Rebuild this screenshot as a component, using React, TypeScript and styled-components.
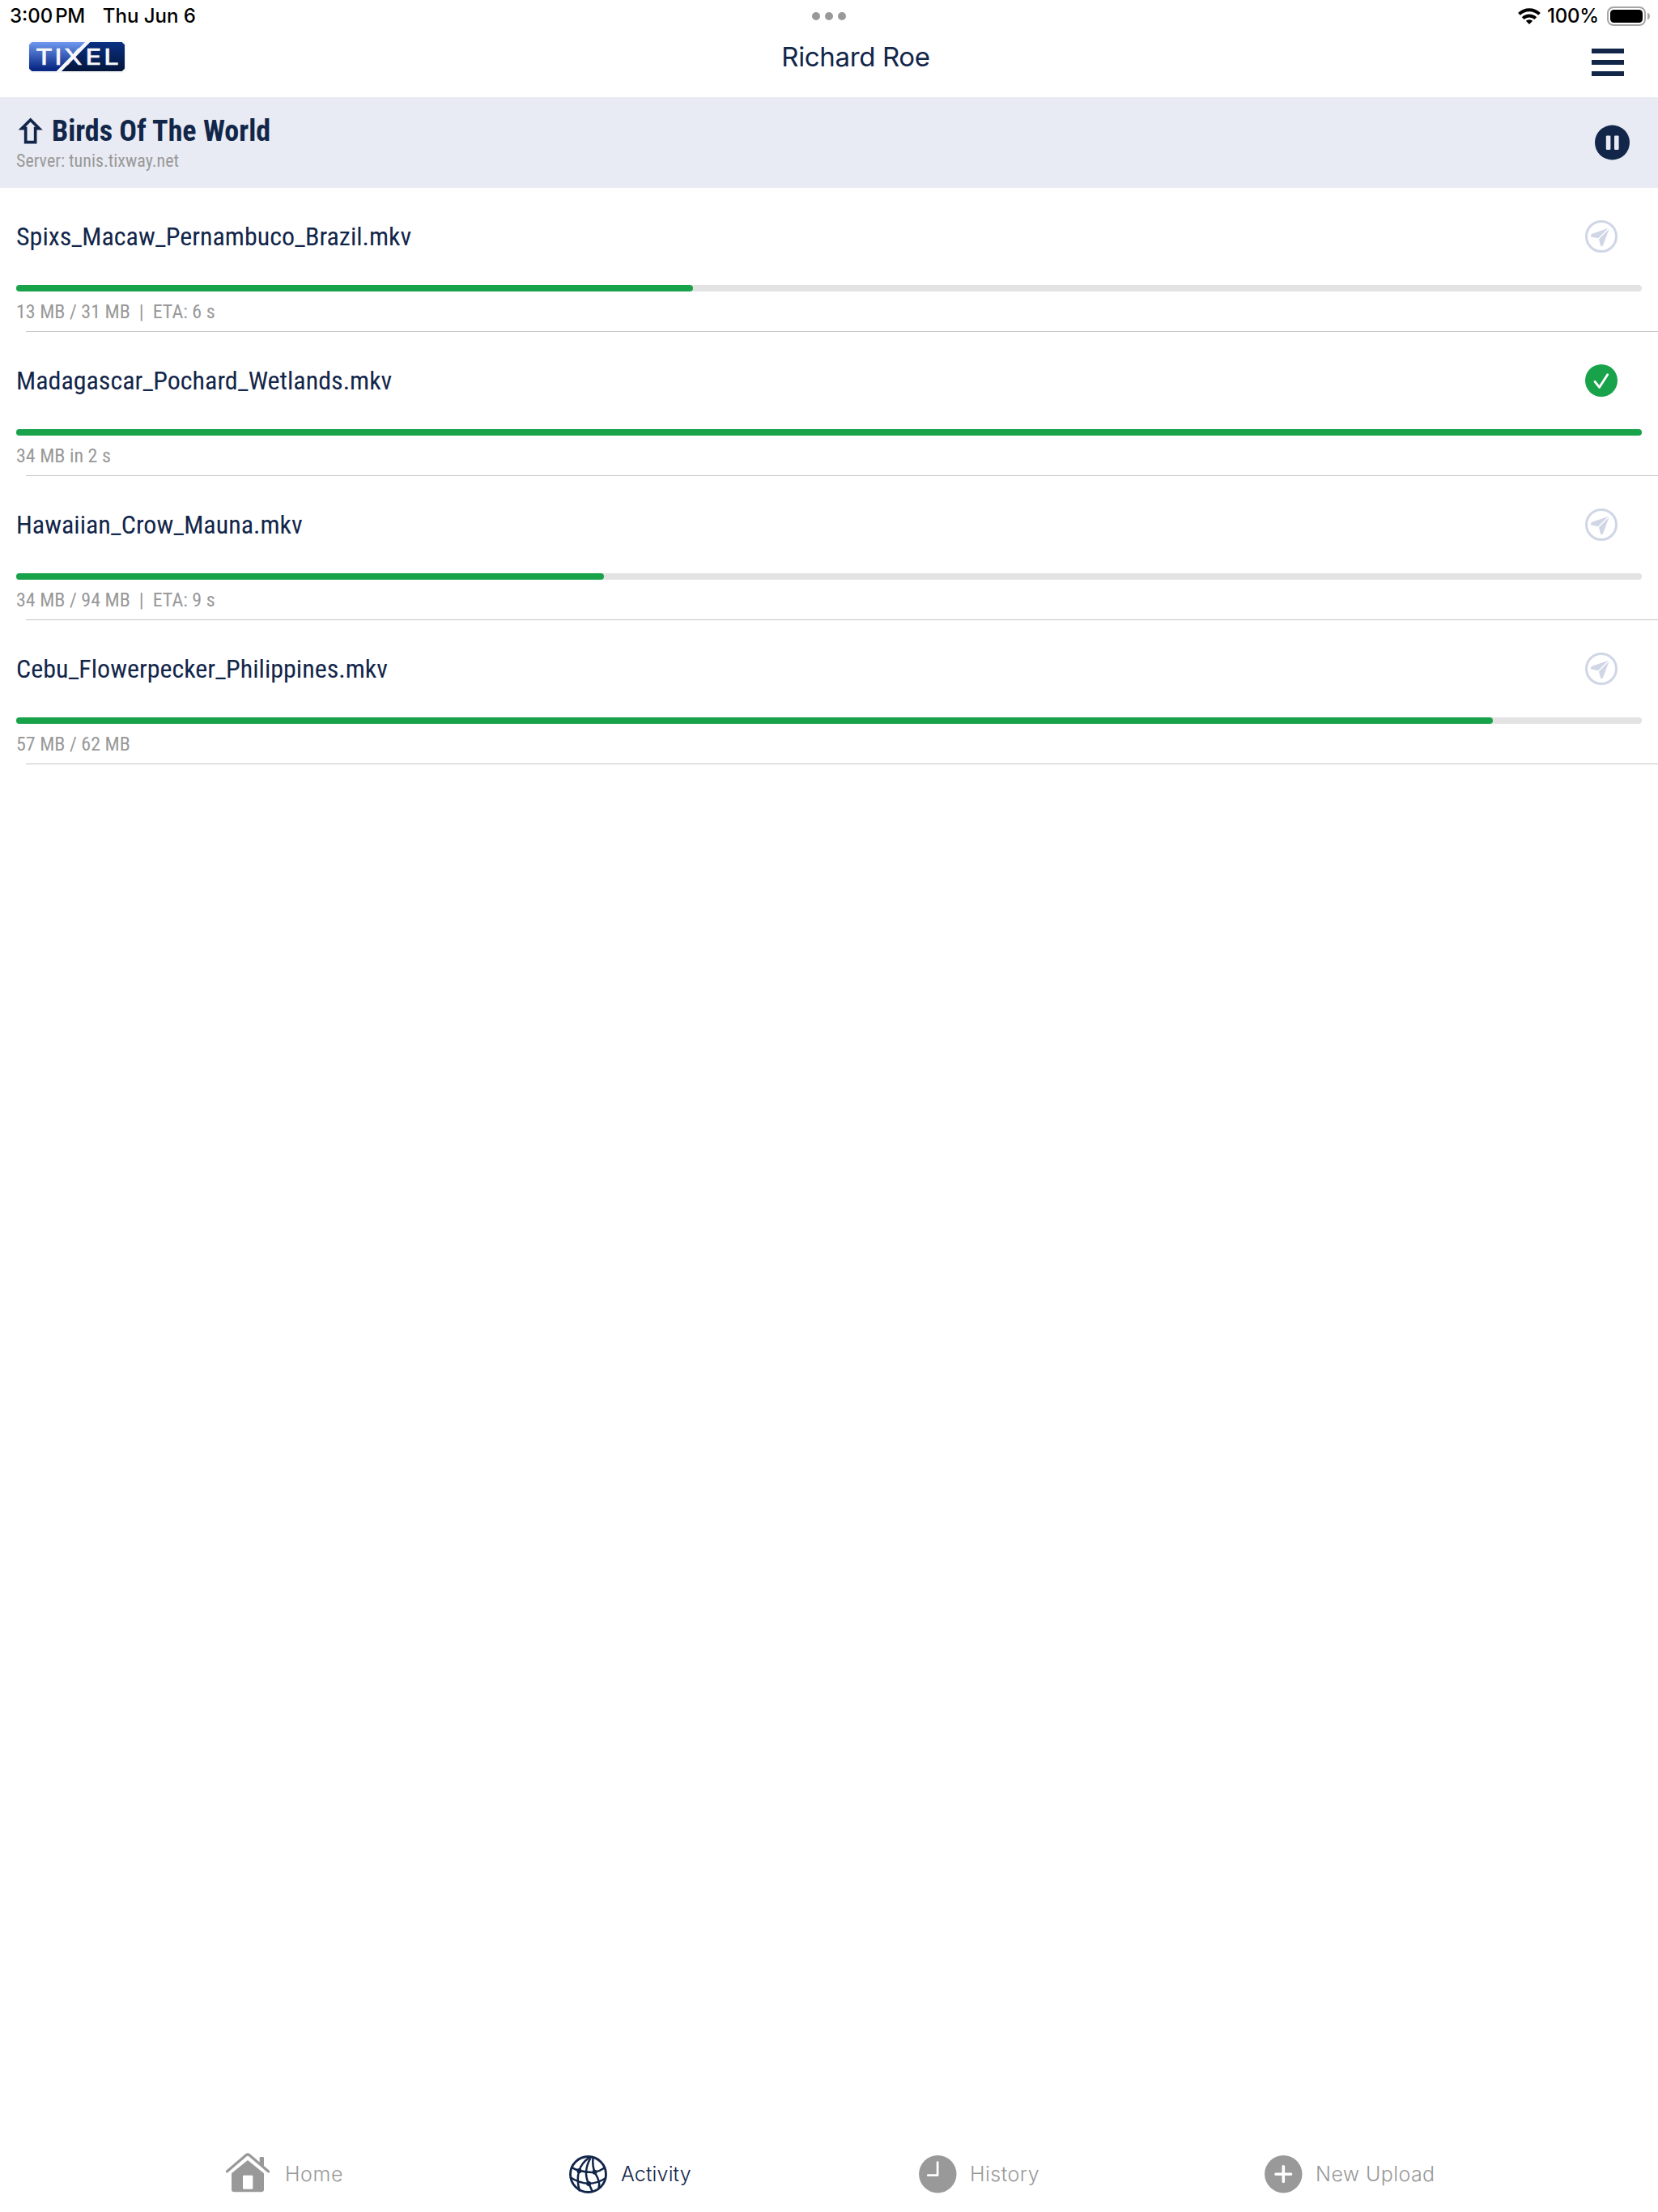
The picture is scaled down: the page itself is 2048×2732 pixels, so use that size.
import * as React from 'react';
import styled, { createGlobalStyle } from 'styled-components';

const navy = '#12264a';
const grey = '#999999';
const green = '#18a34a';

const GlobalStyle = createGlobalStyle`
    body{
        margin: 0;
        background: white;
        font-family: Inter, "Liberation Sans", sans-serif;
    }
    svg{
        display: block;
        flex: none;
    }
`;

const Screen = styled.div`
    display: flex;
    flex-direction: column;
    width: 2048px;
    height: 2732px;
    background: white;
    color: ${navy};
`;

const StatusBar = styled.div`
    display: grid;
    grid-template-columns: 1fr auto 1fr;
    height: 40px;
    padding: 0 10px 0 12px;
    box-sizing: border-box;
    color: black;
    font-size: 24px;
    font-weight: 500;
    line-height: 39px;
    .time{
        margin-right: 22px;
    }
    .period{
        margin-left: 3px;
        letter-spacing: -0.4px;
    }
`;

const Dots = styled.div`
    display: flex;
    align-items: center;
    gap: 6px;
    margin-right: 2px;
    i{
        width: 10px;
        height: 10px;
        border-radius: 50%;
        background: ${grey};
    }
`;

const StatusRight = styled.div`
    display: flex;
    justify-content: flex-end;
    .percent{
        margin: 0 10px 0 8px;
        letter-spacing: -0.2px;
    }
`;

const Header = styled.header`
    display: flex;
    align-items: flex-start;
    height: 80px;
    padding: 10px 42px 0 35px;
    box-sizing: border-box;
`;

const Title = styled.h1`
    flex: 1;
    margin: 0;
    padding-right: 8px;
    text-align: center;
    font-size: 33px;
    font-weight: 390;
    line-height: 40px;
    letter-spacing: -0.35px;
`;

const Burger = styled.div`
    display: flex;
    flex-direction: column;
    gap: 8px;
    width: 40px;
    margin-top: 10px;
    i{
        height: 6px;
        background: ${navy};
    }
`;

const Project = styled.section`
    display: flex;
    align-items: center;
    justify-content: space-between;
    height: 112px;
    padding: 0 35px 0 20px;
    box-sizing: border-box;
    background: #e8ebf3;
    font-family: "Roboto Condensed", Roboto, sans-serif;
    font-stretch: 75%;
`;

const ProjectInfo = styled.div`
    height: 70px;
    h2{
        display: flex;
        gap: 11px;
        margin: 0 0 3px;
        padding-left: 3px;
        font-size: 36px;
        font-weight: 700;
        line-height: 42px;
    }
    h2 svg{
        margin-top: 4px;
    }
    p{
        margin: 0;
        color: ${grey};
        font-size: 22px;
        font-weight: 380;
        line-height: 25px;
    }
`;

const List = styled.main`
    flex: 1;
    font-family: "Roboto Condensed", Roboto, sans-serif;
    font-stretch: 75%;
    font-weight: 375;
`;

const Row = styled.div`
    height: 178px;
    padding: 40px 20px 0;
    box-sizing: border-box;
    background: linear-gradient(#c6c6c8, #c6c6c8) 32px 100% / 100% 1px no-repeat;
    .top{
        display: flex;
        align-items: center;
        justify-content: space-between;
        height: 40px;
        padding-right: 30px;
        font-size: 32px;
        line-height: 38px;
    }
    .meta{
        color: ${grey};
        font-size: 24px;
        line-height: 28px;
        white-space: pre;
    }
`;

const Track = styled.div`
    height: 8px;
    margin: 40px 0 11px;
    border-radius: 4px;
    background: #e3e3e3;
    div{
        height: 8px;
        border-radius: 4px;
        background: ${green};
    }
`;

const TabBar = styled.nav`
    display: grid;
    grid-template-columns: 424px 432px 427px auto;
    height: 94px;
    padding-left: 279px;
`;

const Tab = styled.div<{ $active?: boolean; $gap: number; $spacing: number }>`
    display: flex;
    align-items: center;
    gap: ${p => p.$gap}px;
    color: ${p => (p.$active ? navy : grey)};
    font-size: 25px;
    font-weight: 365;
    line-height: 30px;
    letter-spacing: ${p => p.$spacing}px;
`;

const Logo = () => (
    <svg width="121" height="40" viewBox="0 0 363 120">
        <defs>
            <linearGradient id="logoLeft" x1="0" y1="0" x2="0" y2="1">
                <stop offset="0" stopColor="#6f97f0" />
                <stop offset="0.9" stopColor="#0a2a86" />
            </linearGradient>
            <linearGradient id="logoRight" x1="0" y1="0" x2="0" y2="1">
                <stop offset="0" stopColor="#0a3084" />
                <stop offset="1" stopColor="#03153a" />
            </linearGradient>
        </defs>
        <rect width="363" height="120" rx="14" fill="#f8f8fa" />
        <path d="M3 16 13 6H210L104 114H13L3 104Z" fill="url(#logoLeft)" />
        <path d="M229 6H347L357 16V104L347 114H123Z" fill="url(#logoRight)" />
        <text
            transform="scale(1.2 1)"
            x="48.7 92.5 138.3 201 256.5"
            y="90"
            textAnchor="middle"
            fontSize="82"
            fontWeight="500"
            fill="#f8f8fa"
            stroke="#f8f8fa"
            strokeWidth="1"
            strokeLinejoin="round"
        >
            TIXEL
        </text>
    </svg>
);

const Wifi = () => (
    <svg width="28" height="39" viewBox="0 0 28 39" fill="none" stroke="black" strokeWidth="4">
        <path d="M1.5 17.4a17.8 17.8 0 0 1 25 0" />
        <path d="M6.2 22.6a11.2 11.2 0 0 1 15.6 0" />
        <path d="M14 30l-4.2-4.2a6.2 6.2 0 0 1 8.4 0Z" fill="black" stroke="none" />
    </svg>
);

const Battery = () => (
    <svg width="53" height="40" viewBox="0 0 53 40">
        <rect x="1" y="9" width="46" height="22" rx="7" fill="none" stroke="#a6a6a6" strokeWidth="2" />
        <rect x="4" y="12" width="40" height="16" rx="4.5" />
        <path d="M50 15.5c4 1.6 4 7.4 0 9Z" fill="#a6a6a6" />
    </svg>
);

const UploadArrow = () => (
    <svg width="30" height="34" viewBox="0 0 90 102" fill="none" stroke={navy} strokeWidth="11">
        <path d="M44 9 76 41H62V92H26V41H12Z" />
    </svg>
);

const Pause = () => (
    <svg width="43" height="44" viewBox="0 0 43 44">
        <circle cx="21.5" cy="22" r="21.5" fill={navy} />
        <rect x="13.8" y="13.5" width="5.6" height="17.5" rx="1.2" fill="#e8ebf3" />
        <rect x="24" y="13.5" width="5.6" height="17.5" rx="1.2" fill="#e8ebf3" />
    </svg>
);

const Sending = () => (
    <svg width="40" height="40" viewBox="0 0 120 120" fill="#d0d6e6">
        <circle cx="60" cy="60" r="55.5" fill="none" stroke="#d0d6e6" strokeWidth="9" />
        <path d="M86 29 26 50Q20 53 20 58 20 62 25 62L48 67Z" />
        <path d="M89 32 67 91Q65 97 61 97 57 97 56 91L51 70Z" />
    </svg>
);

const Done = () => (
    <svg width="40" height="40" viewBox="0 0 120 120">
        <circle cx="60" cy="60" r="60" fill={green} />
        <path d="M36 64 53 85 83 38" fill="none" stroke="white" strokeWidth="8.5" strokeLinecap="round" strokeLinejoin="round" />
    </svg>
);

const Home = () => (
    <svg width="54" height="52" viewBox="0 0 162 156" fill={grey}>
        <path d="M4 69 74 9q7-6 14 0l70 60" fill="none" stroke={grey} strokeWidth="9.5" strokeLinecap="round" />
        <path d="M125 44V19q0-4 4-4h8q4 0 4 4v38Z" />
        <path fillRule="evenodd" d="M81 27 141 76V135q0 10-10 10H31q-10 0-10-10V76ZM66 83q-3 0-3 3v45q0 3 3 3h31q3 0 3-3V86q0-3-3-3Z" />
    </svg>
);

const Globe = () => (
    <svg width="47" height="47" viewBox="0 0 140 140" fill="none" stroke={navy} strokeWidth="7.5">
        <circle cx="70" cy="70" r="65.5" strokeWidth="8.5" />
        <path d="M73 9Q46 28 37 56 26 90 39 132" />
        <path d="M79 9Q50 60 72 104 80 120 86 134" />
        <path d="M88 9Q85 38 94 62 106 82 110 98 112 108 109 120" />
        <path d="M10 45Q24 53 37 56 66 64 94 62 113 58 130 46" />
        <path d="M5 81Q34 101 72 104 104 103 134 84" />
        <g fill={navy} stroke="none">
            <circle cx="37" cy="57" r="9" />
            <circle cx="94" cy="62" r="9" />
            <circle cx="72" cy="104" r="9" />
        </g>
    </svg>
);

const Clock = () => (
    <svg width="47" height="47" viewBox="0 0 47 47">
        <circle cx="23.3" cy="23.2" r="23.2" fill={grey} />
        <path d="M23.1 8.7V24.7H11.3" fill="none" stroke="white" strokeWidth="2.8" strokeLinecap="round" strokeLinejoin="round" />
    </svg>
);

const Plus = () => (
    <svg width="47" height="47" viewBox="0 0 47 47">
        <circle cx="23.3" cy="23.2" r="23.2" fill={grey} />
        <path d="M23.3 13.9V32.5M14 23.2H32.6" stroke="white" strokeWidth="3.6" strokeLinecap="round" />
    </svg>
);

const files = [
    { name: 'Spixs_Macaw_Pernambuco_Brazil.mkv', percent: 41.63, meta: '13 MB / 31 MB  |  ETA: 6 s' },
    { name: 'Madagascar_Pochard_Wetlands.mkv', percent: 100, meta: '34 MB in 2 s' },
    { name: 'Hawaiian_Crow_Mauna.mkv', percent: 36.16, meta: '34 MB / 94 MB  |  ETA: 9 s' },
    { name: 'Cebu_Flowerpecker_Philippines.mkv', percent: 90.84, meta: '57 MB / 62 MB' },
];

const FileRow: React.FunctionComponent<{
    name: string;
    percent: number;
    meta: string;
}> = ({ name, percent, meta }) => (
    <Row>
        <div className="top">
            <span>{name}</span>
            {percent === 100 ? <Done /> : <Sending />}
        </div>
        <Track>
            <div style={{ width: percent + '%' }} />
        </Track>
        <div className="meta">{meta}</div>
    </Row>
);

const App = () => (
    <Screen>
        <GlobalStyle />
        <StatusBar>
            <div>
                <span className="time">3:00<span className="period">PM</span></span>
                <span>Thu Jun 6</span>
            </div>
            <Dots><i /><i /><i /></Dots>
            <StatusRight>
                <Wifi />
                <span className="percent">100%</span>
                <Battery />
            </StatusRight>
        </StatusBar>
        <Header>
            <Logo />
            <Title>Richard Roe</Title>
            <Burger><i /><i /><i /></Burger>
        </Header>
        <Project>
            <ProjectInfo>
                <h2><UploadArrow />Birds Of The World</h2>
                <p>Server: tunis.tixway.net</p>
            </ProjectInfo>
            <Pause />
        </Project>
        <List>
            {files.map(file => <FileRow key={file.name} {...file} />)}
        </List>
        <TabBar>
            <Tab $gap={19} $spacing={0.6}><Home />Home</Tab>
            <Tab $active $gap={17} $spacing={0.15}><Globe />Activity</Tab>
            <Tab $gap={16} $spacing={0.5}><Clock />History</Tab>
            <Tab $gap={16} $spacing={0.4}><Plus />New Upload</Tab>
        </TabBar>
    </Screen>
);

export default App;
